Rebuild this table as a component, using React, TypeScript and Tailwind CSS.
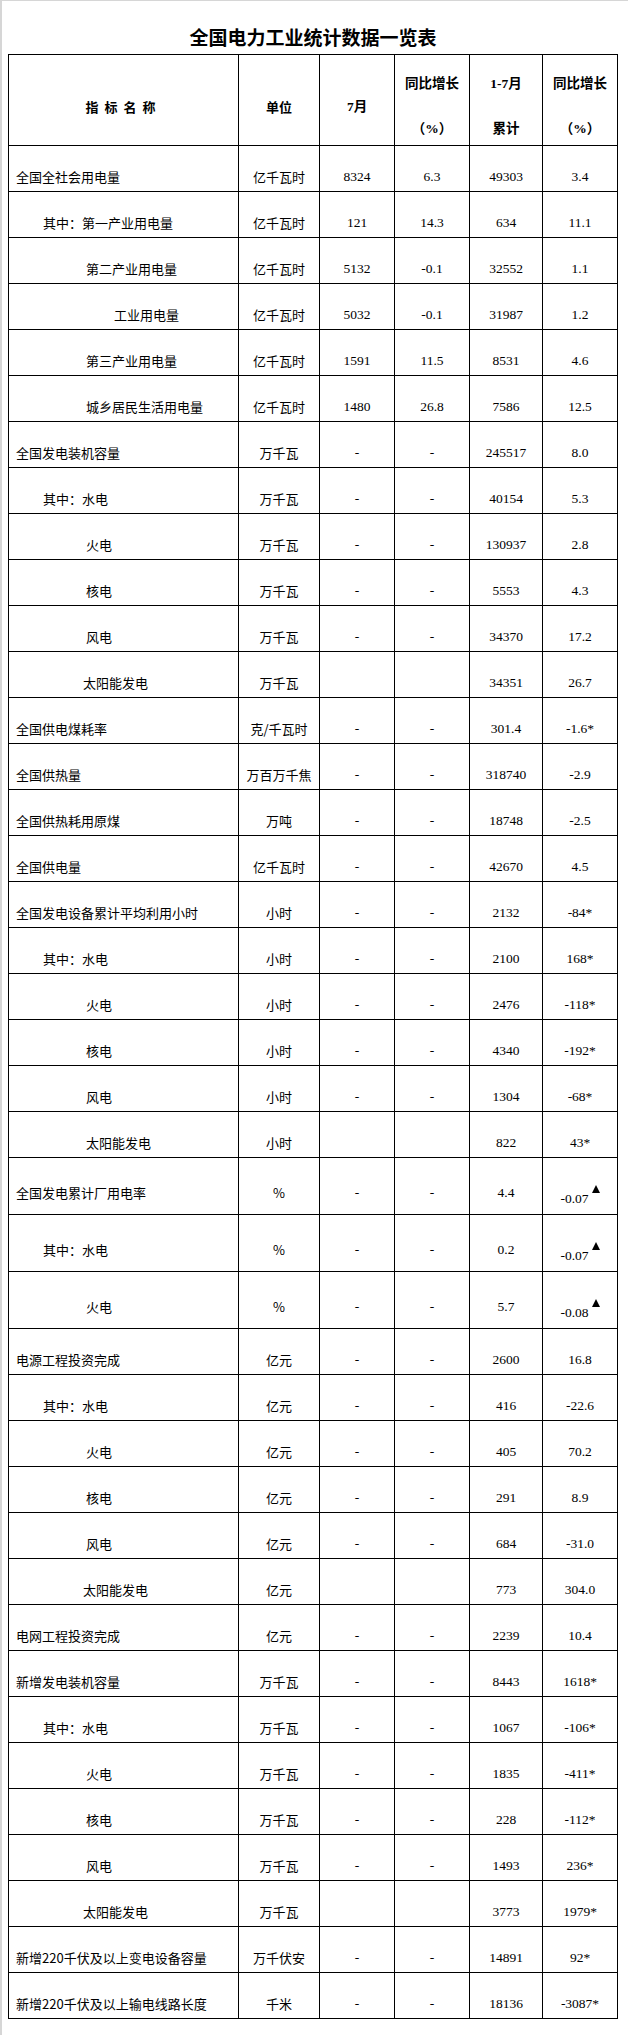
import React from "react"

type Row = {
  name: string
  indent: string
  unit: string
  m: string
  my: string
  cum: string
  cy: string
  tall?: boolean
}

const rows: Row[] = [
  { name: "全国全社会用电量", indent: "pl-[7px]", unit: "亿千瓦时", m: "8324", my: "6.3", cum: "49303", cy: "3.4" },
  { name: "其中：第一产业用电量", indent: "pl-[34px]", unit: "亿千瓦时", m: "121", my: "14.3", cum: "634", cy: "11.1" },
  { name: "第二产业用电量", indent: "pl-[77px]", unit: "亿千瓦时", m: "5132", my: "-0.1", cum: "32552", cy: "1.1" },
  { name: "工业用电量", indent: "pl-[105px]", unit: "亿千瓦时", m: "5032", my: "-0.1", cum: "31987", cy: "1.2" },
  { name: "第三产业用电量", indent: "pl-[77px]", unit: "亿千瓦时", m: "1591", my: "11.5", cum: "8531", cy: "4.6" },
  { name: "城乡居民生活用电量", indent: "pl-[77px]", unit: "亿千瓦时", m: "1480", my: "26.8", cum: "7586", cy: "12.5" },
  { name: "全国发电装机容量", indent: "pl-[7px]", unit: "万千瓦", m: "-", my: "-", cum: "245517", cy: "8.0" },
  { name: "其中：水电", indent: "pl-[34px]", unit: "万千瓦", m: "-", my: "-", cum: "40154", cy: "5.3" },
  { name: "火电", indent: "pl-[77px]", unit: "万千瓦", m: "-", my: "-", cum: "130937", cy: "2.8" },
  { name: "核电", indent: "pl-[77px]", unit: "万千瓦", m: "-", my: "-", cum: "5553", cy: "4.3" },
  { name: "风电", indent: "pl-[77px]", unit: "万千瓦", m: "-", my: "-", cum: "34370", cy: "17.2" },
  { name: "太阳能发电", indent: "pl-[74px]", unit: "万千瓦", m: "", my: "", cum: "34351", cy: "26.7" },
  { name: "全国供电煤耗率", indent: "pl-[7px]", unit: "克/千瓦时", m: "-", my: "-", cum: "301.4", cy: "-1.6*" },
  { name: "全国供热量", indent: "pl-[7px]", unit: "万百万千焦", m: "-", my: "-", cum: "318740", cy: "-2.9" },
  { name: "全国供热耗用原煤", indent: "pl-[7px]", unit: "万吨", m: "-", my: "-", cum: "18748", cy: "-2.5" },
  { name: "全国供电量", indent: "pl-[7px]", unit: "亿千瓦时", m: "-", my: "-", cum: "42670", cy: "4.5" },
  { name: "全国发电设备累计平均利用小时", indent: "pl-[7px]", unit: "小时", m: "-", my: "-", cum: "2132", cy: "-84*" },
  { name: "其中：水电", indent: "pl-[34px]", unit: "小时", m: "-", my: "-", cum: "2100", cy: "168*" },
  { name: "火电", indent: "pl-[77px]", unit: "小时", m: "-", my: "-", cum: "2476", cy: "-118*" },
  { name: "核电", indent: "pl-[77px]", unit: "小时", m: "-", my: "-", cum: "4340", cy: "-192*" },
  { name: "风电", indent: "pl-[77px]", unit: "小时", m: "-", my: "-", cum: "1304", cy: "-68*" },
  { name: "太阳能发电", indent: "pl-[77px]", unit: "小时", m: "", my: "", cum: "822", cy: "43*" },
  { name: "全国发电累计厂用电率", indent: "pl-[7px]", unit: "%", m: "-", my: "-", cum: "4.4", cy: "-0.07", tall: true },
  { name: "其中：水电", indent: "pl-[34px]", unit: "%", m: "-", my: "-", cum: "0.2", cy: "-0.07", tall: true },
  { name: "火电", indent: "pl-[77px]", unit: "%", m: "-", my: "-", cum: "5.7", cy: "-0.08", tall: true },
  { name: "电源工程投资完成", indent: "pl-[7px]", unit: "亿元", m: "-", my: "-", cum: "2600", cy: "16.8" },
  { name: "其中：水电", indent: "pl-[34px]", unit: "亿元", m: "-", my: "-", cum: "416", cy: "-22.6" },
  { name: "火电", indent: "pl-[77px]", unit: "亿元", m: "-", my: "-", cum: "405", cy: "70.2" },
  { name: "核电", indent: "pl-[77px]", unit: "亿元", m: "-", my: "-", cum: "291", cy: "8.9" },
  { name: "风电", indent: "pl-[77px]", unit: "亿元", m: "-", my: "-", cum: "684", cy: "-31.0" },
  { name: "太阳能发电", indent: "pl-[74px]", unit: "亿元", m: "", my: "", cum: "773", cy: "304.0" },
  { name: "电网工程投资完成", indent: "pl-[7px]", unit: "亿元", m: "-", my: "-", cum: "2239", cy: "10.4" },
  { name: "新增发电装机容量", indent: "pl-[7px]", unit: "万千瓦", m: "-", my: "-", cum: "8443", cy: "1618*" },
  { name: "其中：水电", indent: "pl-[34px]", unit: "万千瓦", m: "-", my: "-", cum: "1067", cy: "-106*" },
  { name: "火电", indent: "pl-[77px]", unit: "万千瓦", m: "-", my: "-", cum: "1835", cy: "-411*" },
  { name: "核电", indent: "pl-[77px]", unit: "万千瓦", m: "-", my: "-", cum: "228", cy: "-112*" },
  { name: "风电", indent: "pl-[77px]", unit: "万千瓦", m: "-", my: "-", cum: "1493", cy: "236*" },
  { name: "太阳能发电", indent: "pl-[74px]", unit: "万千瓦", m: "", my: "", cum: "3773", cy: "1979*" },
  { name: "新增220千伏及以上变电设备容量", indent: "pl-[7px]", unit: "万千伏安", m: "-", my: "-", cum: "14891", cy: "92*" },
  { name: "新增220千伏及以上输电线路长度", indent: "pl-[7px]", unit: "千米", m: "-", my: "-", cum: "18136", cy: "-3087*" },
]

const cjk = "font-['Noto_Sans_CJK_SC',sans-serif] text-[13px] leading-[16px]"
const num = "font-['Liberation_Serif','Noto_Sans_CJK_SC',serif] text-[13.5px] leading-[16px]"

// black marker after the 厂用电率 changes
function Triangle() {
  return (
    <svg width="8" height="8" viewBox="0 0 8 8" className="mb-[14px] ml-[3px]">
      <path d="M4 0 L8 8 L0 8 Z" fill="#000" />
    </svg>
  )
}

function DataRow({ row }: { row: Row }) {
  const h = row.tall ? "h-[57px] pb-[13px]" : "h-[46px] pb-[6px]"
  const cell = `flex items-end justify-center border-r border-b border-black ${h}`
  return (
    <>
      <div className={`flex items-end border-r border-b border-black ${h} ${row.indent} ${cjk}`}>
        {row.name}
      </div>
      <div className={`${cell} ${cjk}`}>{row.unit}</div>
      <div className={`${cell} ${num}`}>{row.m}</div>
      <div className={`${cell} ${num}`}>{row.my}</div>
      <div className={`${cell} ${num}`}>{row.cum}</div>
      {row.tall ? (
        <div className={`flex h-[57px] items-end justify-center border-r border-b border-black pb-[7px] ${num}`}>
          <span className="flex items-end">
            <span>{row.cy}</span>
            <Triangle />
          </span>
        </div>
      ) : (
        <div className={`${cell} ${num}`}>{row.cy}</div>
      )}
    </>
  )
}

export default function App() {
  const head = "flex h-[91px] flex-col items-center justify-center border-r border-b border-black pt-[13px] font-bold text-black"
  return (
    <div className="min-h-screen w-full border-t border-l-2 border-[#d6d6d6] bg-white pl-[6px] text-black">
      <div className="flex h-[53px] w-[610px] items-end justify-center pb-[5px]">
        <h1 className="font-['Noto_Sans_CJK_SC',sans-serif] text-[19px] leading-[24px] font-bold">
          全国电力工业统计数据一览表
        </h1>
      </div>
      <div className="grid w-[610px] grid-cols-[230px_81px_75px_75px_73px_75px] border-t border-l border-black">
        <div className={`${head} ${cjk}`}>
          <span className="tracking-[6px]">指标名称</span>
        </div>
        <div className={`${head} ${cjk}`}>单位</div>
        <div className={`${head} ${num}`}>7月</div>
        <div className={`${head} ${num} gap-[29px]`}>
          <span>同比增长</span>
          <span>（%）</span>
        </div>
        <div className={`${head} ${num} gap-[29px]`}>
          <span>1-7月</span>
          <span>累计</span>
        </div>
        <div className={`${head} ${num} gap-[29px]`}>
          <span>同比增长</span>
          <span>（%）</span>
        </div>
        {rows.map((r, i) => (
          <DataRow key={i} row={r} />
        ))}
      </div>
    </div>
  )
}
